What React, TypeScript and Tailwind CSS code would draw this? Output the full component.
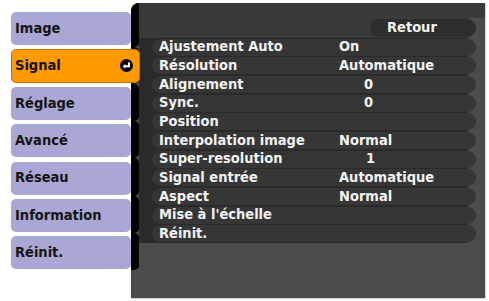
const tabs = ["Image", "Signal", "Réglage", "Avancé", "Réseau", "Information", "Réinit."];

const rows: { label: string; value?: string; indent?: string }[] = [
  { label: "Ajustement Auto", value: "On" },
  { label: "Résolution", value: "Automatique" },
  { label: "Alignement", value: "0", indent: "pl-[25px]" },
  { label: "Sync.", value: "0", indent: "pl-[25px]" },
  { label: "Position" },
  { label: "Interpolation image", value: "Normal" },
  { label: "Super-resolution", value: "1", indent: "pl-[27px]" },
  { label: "Signal entrée", value: "Automatique" },
  { label: "Aspect", value: "Normal" },
  { label: "Mise à l'échelle" },
  { label: "Réinit." },
];

function EnterIcon() {
  return (
    <svg width="13" height="13" viewBox="0 0 13 13">
      <circle cx="6.5" cy="6.5" r="6.5" fill="#000" />
      <path d="M9 3.2 V7.3 H4.6" stroke="#fff" strokeWidth="1.9" fill="none" />
      <path d="M2.6 7.3 L5.4 4.9 L5.4 9.7 Z" fill="#fff" />
    </svg>
  );
}

export default function App() {
  const active = "Signal";

  return (
    <div className="w-[489px] h-[301px] bg-white flex items-start font-['DejaVu_Sans_Condensed','DejaVu_Sans',sans-serif] font-bold text-[14.5px] overflow-hidden">
      <div className="mt-[12px] ml-[11px] w-[120px] flex flex-col gap-[4.33px] relative z-10">
        {tabs.map((t) =>
          t === active ? (
            <div
              key={t}
              className="w-[129px] h-[34px] -mt-[0.5px] rounded-[5px] bg-[#ff9900] border border-[#c27400] flex items-center justify-between pl-[3px] pr-[6px] text-[#111]"
            >
              <span>{t}</span>
              <EnterIcon />
            </div>
          ) : (
            <div
              key={t}
              className="h-[33px] rounded-[5px] bg-[#a9a7d3] flex items-center pl-[4px] text-[#141414]"
            >
              {t}
            </div>
          )
        )}
      </div>

      <div className="mt-[3px] w-[355px] h-[296px] bg-[#4b4b4b] rounded-tl-[8px] border-r border-b border-[#d6d6d6] flex overflow-hidden">
        <div className="w-[8px] shrink-0 flex flex-col">
          <div className="h-[43.5px] bg-black rounded-br-[5px]" />
          {tabs.slice(1).map((t) => (
            <div key={t} className="h-[37.33px] bg-black rounded-r-[5px]" />
          ))}
        </div>

        <div className="flex-1 flex flex-col">
          <div className="h-[15px] bg-[#3a3a3a]" />
          <div className="h-[19.7px] bg-[#3a3a3a] mr-[17px] flex items-center">
            <div className="ml-auto -mr-[8px] w-[106px] h-[18px] rounded-full bg-[#2d2d2d] flex items-center pl-[17px] text-[#f2f2f2]">
              Retour
            </div>
          </div>
          {rows.map((r) => (
            <div key={r.label} className="h-[18.7px] bg-[#2a2a2a] mr-[17px] flex items-center">
              <div className="ml-[13px] -mr-[8px] flex-1 h-[17px] rounded-full bg-[#363636] flex items-center pl-[7px] text-[#f2f2f2]">
                <span className="w-[180px] whitespace-nowrap">{r.label}</span>
                {r.value && <span className={r.indent}>{r.value}</span>}
              </div>
            </div>
          ))}
        </div>
      </div>
    </div>
  );
}
